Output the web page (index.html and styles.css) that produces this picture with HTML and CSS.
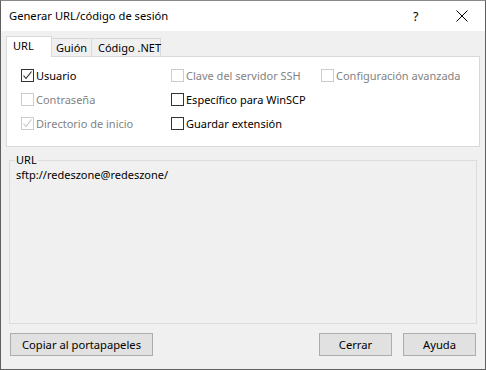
FILE: index.html
```html
<!DOCTYPE html>
<html lang="es">
<head>
    <meta charset="UTF-8">
    <title>Generar URL/código de sesión</title>
    <link rel="stylesheet" href="styles.css">
</head>
<body>
    <div class="window">
        <div class="titlebar">
            <span class="title">Generar URL/código de sesión</span>
            <span class="help">?</span>
            <span class="close">
                <svg width="12" height="12" viewBox="0 0 12 12"><path d="M0.5 0.5 L11.5 11.5 M11.5 0.5 L0.5 11.5" stroke="#000" stroke-width="1"/></svg>
            </span>
        </div>

        <div class="content">
            <div class="tabs">
                <div class="tab active">URL</div>
                <div class="tab tab-guion">Guión</div>
                <div class="tab tab-net">Código .NET</div>
            </div>
            <div class="panel">
                <label class="check checked"><span class="box"><svg width="11" height="11" viewBox="0 0 11 11"><path d="M1.5 5.5 L4 8.5 L9.5 1.5" fill="none" stroke="#222" stroke-width="1.1"/></svg></span>Usuario</label>
                <label class="check disabled"><span class="box"></span>Clave del servidor SSH</label>
                <label class="check disabled"><span class="box"></span>Configuración avanzada</label>
                <label class="check disabled"><span class="box"></span>Contraseña</label>
                <label class="check"><span class="box"></span>Específico para WinSCP</label>
                <span></span>
                <label class="check disabled"><span class="box"><svg width="11" height="11" viewBox="0 0 11 11"><path d="M1.5 5.5 L4 8.5 L9.5 1.5" fill="none" stroke="#c4c4c4" stroke-width="1.1"/></svg></span>Directorio de inicio</label>
                <label class="check"><span class="box"></span>Guardar extensión</label>
            </div>

            <fieldset class="group">
                <legend>URL</legend>
                <div class="url">sftp://redeszone@redeszone/</div>
            </fieldset>

            <div class="buttons">
                <button class="btn wide">Copiar al portapapeles</button>
                <span class="spacer"></span>
                <button class="btn">Cerrar</button>
                <button class="btn">Ayuda</button>
            </div>
        </div>
    </div>
</body>
</html>
```

FILE: styles.css
```css
html, body {
    margin: 0;
    padding: 0;
    background: #f0f0f0;
}
body {
    font-family: "Noto Sans", "Liberation Sans", sans-serif;
    font-size: 11px;
    color: #000;
}
.window {
    box-sizing: border-box;
    width: 486px;
    height: 370px;
    border: 1px solid #5f5f5f;
    border-top-color: #8a8a8a;
    background: #f0f0f0;
    display: flex;
    flex-direction: column;
}
.titlebar {
    height: 30px;
    background: #fff;
    display: flex;
    align-items: center;
    padding-left: 8px;
}
.title {
    flex: 1;
    font-size: 11.2px;
    padding-bottom: 1px;
}
.help {
    width: 20px;
    font-size: 12.5px;
    margin-right: 23px;
}
.close {
    width: 12px;
    height: 12px;
    margin-right: 17px;
    display: flex;
}
.content {
    flex: 1;
    display: flex;
    flex-direction: column;
    padding: 5px 5px 0 5px;
}
.tabs {
    display: flex;
    align-items: flex-end;
    height: 20px;
}
.tab {
    box-sizing: border-box;
    height: 18px;
    border: 1px solid #d9d9d9;
    border-bottom: none;
    background: #f0f0f0;
    line-height: 17px;
    margin-left: -1px;
    white-space: nowrap;
    flex-shrink: 0;
}
.tab.active {
    width: 46px;
    height: 21px;
    margin-bottom: -1px;
    margin-left: 0;
    background: #fff;
    padding-left: 6px;
    line-height: 18px;
    position: relative;
    z-index: 1;
}
.tab-guion {
    width: 41px;
    padding-left: 4px;
}
.tab-net {
    width: 70px;
    padding-left: 6px;
}
.panel {
    box-sizing: border-box;
    height: 91px;
    background: #fff;
    border: 1px solid #d9d9d9;
    padding: 12px 0 0 14px;
    display: grid;
    grid-template-columns: 150px 150px 1fr;
    grid-auto-rows: 24px;
    align-content: start;
}
.check {
    display: flex;
    align-items: flex-start;
    height: 16px;
    line-height: 14px;
    white-space: nowrap;
}
.box {
    box-sizing: border-box;
    width: 13px;
    height: 13px;
    border: 1px solid #333;
    background: #fff;
    margin-right: 2px;
    display: flex;
    align-items: center;
    justify-content: center;
    flex-shrink: 0;
}
.check.disabled {
    color: #838383;
}
.check.disabled .box {
    border-color: #cccccc;
}
.group {
    box-sizing: border-box;
    margin: 7px 3px 0 3px;
    height: 170px;
    border: 1px solid #dcdcdc;
    padding: 0 6px;
}
.group legend {
    padding: 0 1px;
    margin-left: -1px;
    line-height: 12px;
}
.url {
    margin-top: 1px;
}
.buttons {
    display: flex;
    gap: 11px;
    margin: 9px 4px 0 4px;
}
.spacer {
    flex: 1;
}
.btn {
    box-sizing: border-box;
    height: 23px;
    width: 73px;
    background: #e1e1e1;
    border: 1px solid #adadad;
    font-family: inherit;
    font-size: 11.2px;
    color: #000;
    padding: 0;
}
.btn.wide {
    width: 143px;
}
```
